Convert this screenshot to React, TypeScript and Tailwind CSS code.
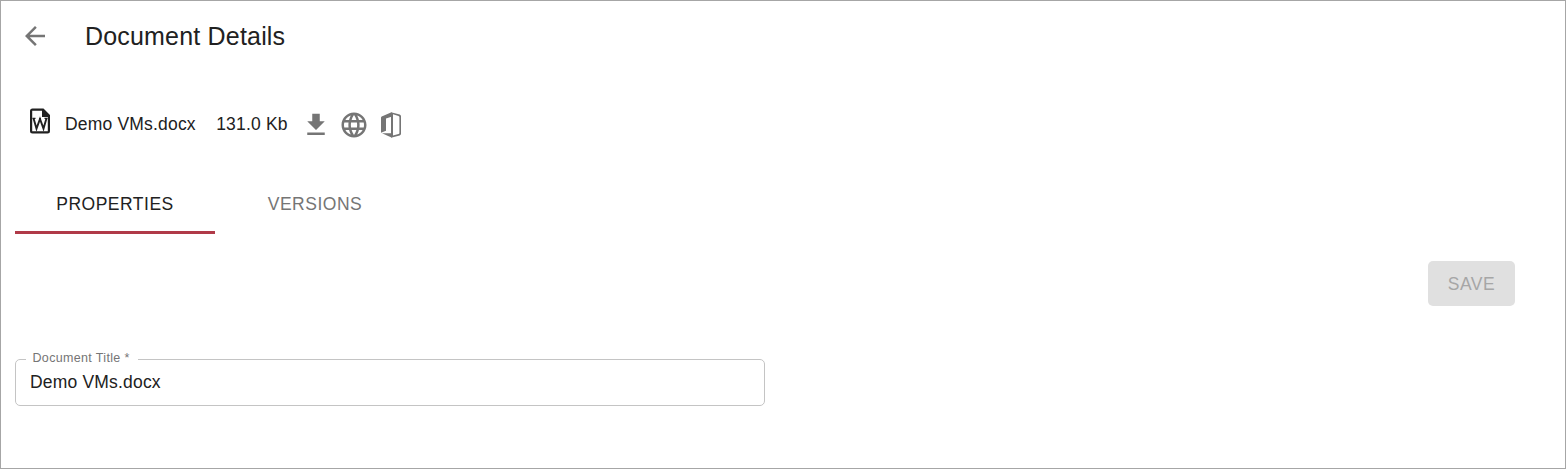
import type { ReactNode } from "react";

function Icon({ children, className = "" }: { children: ReactNode; className?: string }) {
  return (
    <svg viewBox="0 0 24 24" fill="currentColor" className={`size-[30px] shrink-0 text-[#757575] ${className}`}>
      {children}
    </svg>
  );
}

function Header() {
  return (
    <header className="flex h-[70px] items-center pl-[19px]">
      <button aria-label="Back">
        <Icon>
          <path d="M20 11H7.83l5.59-5.59L12 4l-8 8 8 8 1.41-1.41L7.83 13H20v-2z" />
        </Icon>
      </button>
      <h1 className="ml-[35px] text-[25px] leading-[40px] tracking-[0.0075em]">Document Details</h1>
    </header>
  );
}

function FileRow() {
  return (
    <div className="mt-[37px] flex h-[32px] items-center pl-[28px] text-[17.5px] tracking-[0.01071em]">
      <svg viewBox="0 0 22 26" className="mb-[7px] h-[26px] w-[22px] shrink-0">
        <path
          fillRule="evenodd"
          fill="#212121"
          d="M3.500 .5H14.500L21 7V23a2.500 2.500 0 0 1-2.500 2.500H3.500A2.500 2.500 0 0 1 1 23V3A2.500 2.500 0 0 1 3.500 .5ZM3.200 2.700V23.300H18.800V9H13V2.700Z"
        />
        <path d="M4.500 10.200L7.500 20.600L11 11L14.500 20.600L17.500 10.200" fill="none" stroke="#212121" strokeWidth="1.900" />
        <path d="M3.500 10.300H6.500M15.500 10.300H18.500M10 10.700H12" fill="none" stroke="#212121" strokeWidth="1.200" />
      </svg>
      <span className="ml-[14px]">Demo VMs.docx</span>
      <span className="ml-[20.4px]">131.0 Kb</span>
      <button aria-label="Download" className="ml-[13.6px] mt-[2px]">
        <Icon>
          <path d="M19 9h-4V3H9v6H5l7 7 7-7zM5 18v2h14v-2H5z" />
        </Icon>
      </button>
      <button aria-label="Open in browser" className="ml-[8px] mt-[2px]">
        <Icon>
          <path d="M11.990 2C6.470 2 2 6.480 2 12s4.470 10 9.990 10C17.520 22 22 17.520 22 12S17.520 2 11.990 2zm6.930 6h-2.950c-.32-1.250-.78-2.450-1.380-3.560 1.840.63 3.370 1.910 4.330 3.560zM12 4.040c.83 1.200 1.480 2.530 1.910 3.960h-3.820c.43-1.430 1.080-2.760 1.910-3.960zM4.260 14C4.100 13.360 4 12.690 4 12s.1-1.360.26-2h3.380c-.08.66-.14 1.320-.14 2s.06 1.340.14 2H4.260zm.82 2h2.950c.32 1.250.78 2.450 1.380 3.560-1.840-.63-3.370-1.900-4.330-3.560zm2.950-8H5.080c.96-1.660 2.490-2.930 4.330-3.560C8.810 5.550 8.350 6.750 8.030 8zM12 19.960c-.83-1.200-1.480-2.530-1.910-3.960h3.820c-.43 1.430-1.080 2.760-1.910 3.960zM14.340 14H9.660c-.09-.66-.16-1.320-.16-2s.07-1.350.16-2h4.680c.09.65.16 1.320.16 2s-.07 1.340-.16 2zm.25 5.560c.6-1.110 1.060-2.310 1.380-3.560h2.950c-.96 1.650-2.490 2.930-4.330 3.560zM16.360 14c.08-.66.14-1.320.14-2s-.06-1.340-.14-2h3.380c.16.64.26 1.310.26 2s-.1 1.360-.26 2h-3.380z" />
        </Icon>
      </button>
      <button aria-label="Open in Office" className="ml-[11px] mt-[2px]">
        <svg viewBox="0 0 22 26" className="h-[26px] w-[22px] text-[#757575]">
          <path fill="currentColor" d="M1 5.700Q1 5 1.700 4.600L11.500 .2V4.800L6 6.500V18.700L1 20.700Z" />
          <path fill="currentColor" d="M2 21.300H11.500V25.600Z" />
          <path
            fill="currentColor"
            fillRule="evenodd"
            d="M11 .2L19.700 2.600Q21 3 21 4.300V21.700Q21 23 19.700 23.400L11 25.700ZM13 2.300V23.600L18.500 22.100Q19.400 21.800 19.400 21V5Q19.400 4.200 18.500 3.900Z"
          />
        </svg>
      </button>
    </div>
  );
}

function Tabs() {
  return (
    <nav className="ml-[14px] mt-[34px] flex h-[60px] text-[17.5px] tracking-[0.02857em]">
      <button className="w-[200px] border-b-[3px] border-[#b03a48] pt-[3px]">PROPERTIES</button>
      <button className="w-[200px] border-b-[3px] border-transparent pt-[3px] text-[#757575]">VERSIONS</button>
    </nav>
  );
}

export default function App() {
  return (
    <main className="h-[469px] w-[1566px] overflow-hidden border border-[#a6a6a6] bg-white font-['Liberation_Sans',Arial,sans-serif] text-[#212121]">
      <Header />
      <FileRow />
      <Tabs />
      <div className="mr-[50px] mt-[27px] flex justify-end">
        <button disabled className="h-[45px] w-[87px] rounded-[5px] bg-[#e0e0e0] pt-[2px] text-[17.5px] tracking-[0.02857em] text-[#a6a6a6]">
          SAVE
        </button>
      </div>
      <fieldset className="ml-[14px] mt-[44px] h-[56px] w-[750px] rounded-[5px] border border-[#c4c4c4] px-[10px]">
        <legend className="h-[18px] w-[112px] whitespace-nowrap pl-[6.5px] text-[12.5px] leading-[16px] tracking-[0.027em] text-[#757575]">
          Document Title *
        </legend>
        <input
          aria-label="Document Title"
          defaultValue="Demo VMs.docx"
          className="mt-[2px] block w-[700px] pl-[4px] text-[17.5px] leading-[24px] tracking-[0.01071em] outline-none"
        />
      </fieldset>
    </main>
  );
}
